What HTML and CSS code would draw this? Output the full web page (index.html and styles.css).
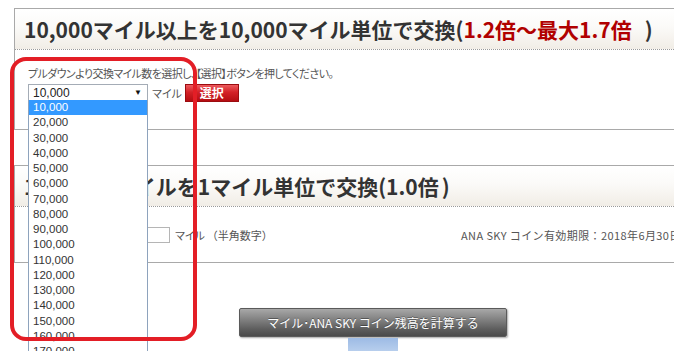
FILE: index.html
```html
<!DOCTYPE html>
<html lang="ja">
<head>
<meta charset="utf-8">
<title>ANA SKY コイン交換</title>
<link rel="stylesheet" href="styles.css">
</head>
<body>
<div class="page">
  <section class="panel">
    <div class="panel-head">
      <h2 class="panel-title">10,000マイル以上を10,000マイル単位で交換(<span class="accent">1.2倍～最大1.7倍</span><span class="close close-wide">)</span></h2>
    </div>
    <div class="panel-body body-select">
      <p class="note">プルダウンより交換マイル数を選択し、【選択】ボタンを押してください。</p>
      <div class="pick-row">
        <div class="select-box">
          <span class="select-value">10,000</span>
          <span class="caret">▼</span>
          <ul class="dropdown">
            <li class="opt active">10,000</li>
            <li class="opt">20,000</li>
            <li class="opt">30,000</li>
            <li class="opt">40,000</li>
            <li class="opt">50,000</li>
            <li class="opt">60,000</li>
            <li class="opt">70,000</li>
            <li class="opt">80,000</li>
            <li class="opt">90,000</li>
            <li class="opt">100,000</li>
            <li class="opt">110,000</li>
            <li class="opt">120,000</li>
            <li class="opt">130,000</li>
            <li class="opt">140,000</li>
            <li class="opt">150,000</li>
            <li class="opt">160,000</li>
            <li class="opt">170,000</li>
          </ul>
        </div>
        <span class="unit">マイル</span>
        <button class="btn-red" type="button">選択</button>
      </div>
    </div>
  </section>

  <section class="panel">
    <div class="panel-head">
      <h2 class="panel-title">1～9,999マイルを1マイル単位で交換(1.0倍<span class="close">)</span></h2>
    </div>
    <div class="panel-body body-input">
      <div class="input-group">
        <input class="num-input" type="text">
        <span class="unit2">マイル</span>
        <span class="hint">（半角数字）</span>
      </div>
      <div class="expiry">ANA SKY コイン有効期限：2018年6月30日</div>
    </div>
  </section>

  <div class="calc-area">
    <button class="btn-calc" type="button">マイル･ANA SKY コイン残高を計算する</button>
    <div class="blue-tab"></div>
  </div>
</div>
<div class="ring"></div>
</body>
</html>
```

FILE: styles.css
```css
html, body {
  margin: 0;
  padding: 0;
}
body {
  background: #fff;
  overflow: hidden;
  font-family: "Noto Sans CJK JP", "Liberation Sans", sans-serif;
  color: #444;
}
.page {
  width: 718px;
  padding: 8px 0 0 14px;
}
.panel {
  border: 1px solid #a9a9a9;
  border-right: none;
}
.panel + .panel {
  margin-top: 35px;
}
.panel-head {
  height: 40px;
  border-bottom: 1px dotted #9a9a9a;
  background: linear-gradient(#ffffff 0%, #fbfaf8 45%, #f1ede6 100%);
  display: flex;
  align-items: center;
  padding-left: 9px;
}
.panel-title {
  margin: 0;
  font-size: 21px;
  font-weight: bold;
  color: #333;
  line-height: 1;
  white-space: nowrap;
}
.accent {
  color: #b10000;
}
.close {
  margin-left: 3px;
}
.close-wide {
  margin-left: 13px;
}
.panel-body {
  box-sizing: border-box;
}
.body-select {
  height: 79px;
  padding: 16px 0 0 13px;
}
.note {
  margin: 0;
  font-size: 11px;
  line-height: 14px;
  color: #555;
  font-feature-settings: "palt";
  letter-spacing: -0.6px;
  white-space: nowrap;
}
.pick-row {
  display: flex;
  align-items: center;
  margin-top: 4px;
  height: 17px;
}
.select-box {
  position: relative;
  width: 120px;
  height: 17px;
  box-sizing: border-box;
  border: 1px solid #a4acb6;
  display: flex;
  align-items: center;
  justify-content: space-between;
  padding: 0 5px 0 4px;
  font-family: "Liberation Sans", sans-serif;
  font-size: 12px;
  color: #222;
}
.caret {
  font-size: 8px;
  color: #111;
}
.dropdown {
  position: absolute;
  left: -1px;
  top: 100%;
  width: 120px;
  box-sizing: border-box;
  margin: 0;
  padding: 0;
  list-style: none;
  background: #fff;
  border: 1px solid #8ea3bd;
  border-top: none;
  z-index: 5;
}
.opt {
  height: 15.25px;
  line-height: 15.25px;
  padding-left: 4px;
  font-family: "Liberation Sans", sans-serif;
  font-size: 11.5px;
  color: #333;
}
.opt.active {
  background: #3399ff;
  color: #fff;
}
.unit {
  margin-left: 4px;
  font-size: 11px;
  color: #555;
  font-feature-settings: "palt";
}
.btn-red {
  margin-left: 3px;
  width: 54px;
  height: 18px;
  padding: 0;
  border: 1px solid #9b0c10;
  background: linear-gradient(#ec5a5d 0%, #d42127 45%, #b50d12 100%);
  color: #fff;
  font-family: "Noto Sans CJK JP", sans-serif;
  font-size: 12px;
  font-weight: bold;
  line-height: 16px;
}
.body-input {
  height: 55px;
  display: flex;
  align-items: center;
  padding-left: 13px;
}
.input-group {
  width: 433px;
  display: flex;
  align-items: center;
}
.num-input {
  margin: 0 0 0 94px;
  width: 48px;
  height: 16px;
  box-sizing: border-box;
  border: 1px solid #b5b5b5;
  padding: 0;
}
.unit2 {
  margin-left: 5px;
  font-size: 11px;
  color: #555;
  font-feature-settings: "palt";
}
.hint {
  margin-left: 2px;
  font-size: 11px;
  color: #555;
}
.expiry {
  font-size: 11px;
  color: #555;
  letter-spacing: 0.4px;
  white-space: nowrap;
}
.calc-area {
  display: flex;
  flex-direction: column;
  align-items: center;
  padding-top: 45px;
}
.btn-calc {
  width: 268px;
  height: 29px;
  padding: 0;
  border: 1px solid #5a5a5a;
  border-radius: 2px;
  background: linear-gradient(#a8a8a8 0%, #808080 40%, #5d5d5d 75%, #4a4a4a 100%);
  color: #fff;
  font-family: "Noto Sans CJK JP", sans-serif;
  font-size: 12px;
  text-shadow: 0 -1px 0 rgba(0,0,0,0.35);
  box-shadow: 1px 1px 2px rgba(0,0,0,0.35);
}
.blue-tab {
  width: 50px;
  height: 20px;
  margin-top: 1px;
  background: linear-gradient(#9dbbe5, #c5d8f1);
}
.ring {
  position: absolute;
  left: 10px;
  top: 57px;
  width: 187px;
  height: 284px;
  box-sizing: border-box;
  border: 4px solid #e31e26;
  border-radius: 16px;
  z-index: 10;
  pointer-events: none;
}
```
